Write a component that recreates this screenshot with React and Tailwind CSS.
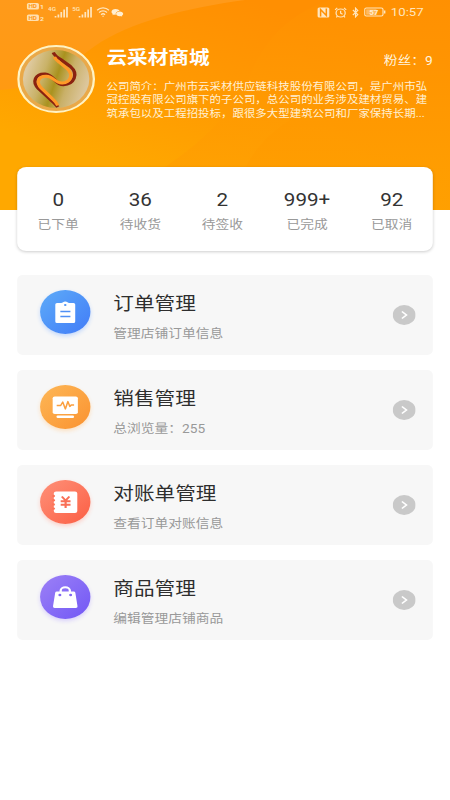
import React from 'react';

const STATS = [
    {value: '0', label: '已下单'},
    {value: '36', label: '待收货'},
    {value: '2', label: '待签收'},
    {value: '999+', label: '已完成'},
    {value: '92', label: '已取消'},
];

const OrderIcon = () => (
    <svg viewBox="0 0 44 44" className="size-11">
        <path fill="#fff" d="M14.8 13h3.700c1.200 0 1.800-1.600 3.500-1.600s2.300 1.600 3.500 1.600h3.700a1.500 1.500 0 0 1 1.500 1.500v17a1.500 1.500 0 0 1-1.500 1.500H14.800a1.500 1.500 0 0 1-1.500-1.500v-17a1.500 1.500 0 0 1 1.500-1.500z"/>
        <circle cx="22" cy="15" r="1.100" fill="#4f93f5"/>
        <path d="M17.700 21.500h8.800M17.700 26.500h8.800" stroke="#4f8ff5" strokeWidth="1.500"/>
    </svg>
);

const SalesIcon = () => (
    <svg viewBox="0 0 44 44" className="size-11">
        <rect x="11" y="11.500" width="22" height="17.500" rx="1.800" fill="#fff"/>
        <path d="M14.500 20.500h3.500l1.800-3.500 2.300 7 2.200-7.500 1.700 5 1.200-1.500h2.500" fill="none" stroke="#fb9f3e" strokeWidth="1.300" strokeLinejoin="round"/>
        <path d="M15.500 31.700h13" stroke="#fff" strokeWidth="2.400" strokeLinecap="round"/>
    </svg>
);

const BillIcon = () => (
    <svg viewBox="0 0 44 44" className="size-11">
        <rect x="12" y="11.500" width="20.500" height="21.500" rx="2" fill="#fff"/>
        <g fill="#fc7558">
            <circle cx="11.800" cy="16" r="1.200"/>
            <circle cx="11.800" cy="20.200" r="1.200"/>
            <circle cx="11.800" cy="24.400" r="1.200"/>
            <circle cx="11.800" cy="28.600" r="1.200"/>
        </g>
        <path d="M19 16.500l3.300 4 3.300-4M22.300 20.500v7.500M18 21.300h8.600M18 24.700h8.600" fill="none" stroke="#f96f56" strokeWidth="1.900"/>
    </svg>
);

const GoodsIcon = () => (
    <svg viewBox="0 0 44 44" className="size-11">
        <path d="M18 17v-1.500a4 3.200 0 0 1 8 0V17" fill="none" stroke="#fff" strokeWidth="2"/>
        <path fill="#fff" d="M14.700 16.500h14.600a1.500 1.500 0 0 1 1.500 1.300l1.900 13.500a1.500 1.500 0 0 1-1.500 1.700H12.800a1.500 1.500 0 0 1-1.500-1.700l1.900-13.500a1.500 1.500 0 0 1 1.500-1.300z"/>
        <circle cx="17.300" cy="20" r="1.300" fill="#8168f2"/>
        <circle cx="26.700" cy="20" r="1.300" fill="#8168f2"/>
    </svg>
);

const MENU = [
    {title: '订单管理', desc: '管理店铺订单信息', icon: OrderIcon, tone: 'from-[#5fabf8] to-[#427bf7] shadow-[0_2px_4px_#c3d8fb]'},
    {title: '销售管理', desc: '总浏览量：255', icon: SalesIcon, tone: 'from-[#fdb756] to-[#fa922e] shadow-[0_2px_4px_#fce0c0]'},
    {title: '对账单管理', desc: '查看订单对账信息', icon: BillIcon, tone: 'from-[#fe9078] to-[#fb5d43] shadow-[0_2px_4px_#fcd0c8]'},
    {title: '商品管理', desc: '编辑管理店铺商品', icon: GoodsIcon, tone: 'from-[#9d80f6] to-[#7256f5] shadow-[0_2px_4px_#d8d0fb]'},
];

const HeaderWaves = () => (
    <svg viewBox="0 0 450 210" preserveAspectRatio="none" className="absolute inset-0 h-full w-full">
        <defs>
            <linearGradient id="base" x1="0" y1="0" x2="0" y2="1">
                <stop offset="0" stopColor="#ff9a1a"/>
                <stop offset="0.420" stopColor="#ff9a12"/>
                <stop offset="1" stopColor="#ffa600"/>
            </linearGradient>
            <linearGradient id="sweep" gradientUnits="userSpaceOnUse" x1="250" y1="0" x2="190" y2="190">
                <stop offset="0" stopColor="#ff8f02"/>
                <stop offset="0.500" stopColor="#ff9902"/>
                <stop offset="1" stopColor="#ffa800"/>
            </linearGradient>
            <linearGradient id="fold" gradientUnits="userSpaceOnUse" x1="300" y1="0" x2="300" y2="170">
                <stop offset="0" stopColor="#ff9102"/>
                <stop offset="1" stopColor="#ff9f02"/>
            </linearGradient>
            <linearGradient id="tail" gradientUnits="userSpaceOnUse" x1="350" y1="75" x2="350" y2="210">
                <stop offset="0" stopColor="#ff9500"/>
                <stop offset="1" stopColor="#ffa000"/>
            </linearGradient>
        </defs>
        <rect width="450" height="210" fill="url(#base)"/>
        <path d="M0 90C40 88 65 68 95 46C130 22 185 8 245 0H450V210H0z" fill="url(#sweep)"/>
        <path d="M450 0H330C285 15 262 45 250 75C235 110 205 140 165 167V210H450z" fill="url(#fold)" opacity="0.700"/>
        <path d="M450 73C350 83 270 115 246 167V210H450z" fill="url(#tail)" opacity="0.700"/>
    </svg>
);

const Signal = ({label}) => (
    <svg viewBox="0 0 18 12" className="h-3 w-[18px]">
        <text x="0" y="5" fontSize="5.500" fontWeight="500" fill="#ffe5bd">{label}</text>
        <path d="M6.500 11.500v-1.500M9 11.500V8.500M11.500 11.500V6M14 11.500V3.500M16.500 11.500V1" stroke="#ffe5bd" strokeWidth="1.500"/>
    </svg>
);

const StatusBar = () => (
    <div className="relative flex h-6 items-center justify-between pl-[23px] pr-[23px] text-[#ffe5bd]">
        <div className="flex items-center gap-[3px]">
            <svg viewBox="0 0 16 20" className="h-5 w-4">
                {[0, 11.5].map((y) => (
                    <g key={y}>
                        <rect x="0.500" y={y + 1} width="10.500" height="6.500" rx="1.500" fill="#ffe0b0"/>
                        <text x="1.800" y={y + 6.300} fontSize="5.500" fontWeight="700" fill="#ff9a18">HD</text>
                        <text x="12" y={y + 7.300} fontSize="6" fontWeight="700" fill="#ffe5bd">{y === 0 ? '1' : '2'}</text>
                    </g>
                ))}
            </svg>
            <Signal label="4G"/>
            <Signal label="5G"/>
            <svg viewBox="0 0 14 12" className="h-3 w-3" preserveAspectRatio="none" fill="none" stroke="#ffe5bd" strokeWidth="1.300">
                <path d="M1 4.300a8.500 8.500 0 0 1 12 0M3 6.500a5.700 5.700 0 0 1 8 0M5 8.700a2.900 2.900 0 0 1 4 0"/>
                <circle cx="7" cy="10.300" r="0.700" fill="#ffe5bd" stroke="none"/>
            </svg>
            <svg viewBox="0 0 12 10" className="-ml-0.5 h-[9px] w-[11px]" fill="#ffefd2">
                <path d="M4.300 1C2 1 0.300 2.400 0.300 4.300c0 1 0.500 1.900 1.300 2.500L1.200 8l1.500-0.700c0.600 0.200 1.200 0.300 1.800 0.200C4 5 5.800 3.200 8.200 3.200 7.700 1.900 6.200 1 4.300 1z"/>
                <path d="M8.300 3.800c-2 0-3.500 1.200-3.500 2.700s1.500 2.700 3.500 2.700c0.400 0 0.800 0 1.200-0.200l1.200 0.700-0.300-1.200c0.800-0.500 1.300-1.200 1.300-2 0-1.500-1.500-2.700-3.400-2.700z"/>
            </svg>
        </div>
        <div className="flex items-center gap-1">
            <svg viewBox="0 0 11 11" className="size-[11px]">
                <rect x="0.300" y="0.500" width="10.400" height="10" rx="1.500" fill="#ffe5bd"/>
                <path d="M3 9.500V2.500l5 6V1.500" fill="none" stroke="#ff9003" strokeWidth="1.300"/>
            </svg>
            <svg viewBox="0 0 11 11" className="size-[11px]" fill="none" stroke="#ffe5bd" strokeWidth="1.100">
                <circle cx="5.500" cy="6" r="4"/>
                <path d="M5.500 3.800V6.200l1.700 1M0.600 2.800l2-1.900M10.400 2.800l-2-1.900M2.700 9.200L1.700 10.400M8.300 9.200l1 1.200"/>
            </svg>
            <svg viewBox="0 0 9 12" className="h-[11px] w-[7px]" preserveAspectRatio="none" fill="none" stroke="#ffe5bd" strokeWidth="1.300">
                <path d="M1.500 3.300l5.500 5L4.500 10.800V1.200L7 3.700l-5.500 5"/>
            </svg>
            <svg viewBox="0 0 19 10" className="h-2.5 w-[19px]">
                <rect x="0.500" y="1" width="16" height="8" rx="1.500" fill="none" stroke="#ffe5bd"/>
                <rect x="1.800" y="2.300" width="9" height="5.400" fill="#ffe5bd" opacity="0.500"/>
                <text x="4.500" y="7.600" fontSize="7" fontWeight="700" fill="#ffeccf">57</text>
                <path d="M18 3.500v3" stroke="#ffe5bd" strokeWidth="1.300"/>
            </svg>
            <span className="pt-0.5 text-[11.5px] leading-none">10:57</span>
        </div>
    </div>
);

const Avatar = () => (
    <svg viewBox="0 0 68 68" className="size-[68px] shrink-0">
        <defs>
            <linearGradient id="gold" x1="0" y1="0.350" x2="1" y2="0.650">
                <stop offset="0.050" stopColor="#dfcaa0"/>
                <stop offset="0.300" stopColor="#c9b268"/>
                <stop offset="0.500" stopColor="#a9921e"/>
                <stop offset="0.680" stopColor="#c9b068"/>
                <stop offset="0.950" stopColor="#dcc69c"/>
            </linearGradient>
        </defs>
        <circle cx="34" cy="34" r="33" fill="#eaa948" stroke="#fff3c4" strokeWidth="2"/>
        <circle cx="34" cy="34" r="29" fill="url(#gold)"/>
        <g fill="none" strokeLinejoin="round">
            <path d="M31.500 7.500Q33 11 38 14.500L46.500 21.500C54 29 49.500 39.500 40.500 39.800C33 40 32 29.500 24.500 29C15.500 28.500 13 37 18.500 43.500L29 54.500Q33 58 35.500 62" stroke="#8a2210" strokeWidth="3"/>
            <path d="M32.500 12Q33.500 14.500 36.500 17L43.500 23.500C50 30 46 37.500 39.500 38C33 38.500 32 31.500 25.500 31.200C18 31 16.500 37.500 21 43L31 54Q34 57 35.500 60.500" stroke="#ff9a28" strokeWidth="3"/>
        </g>
    </svg>
);

const Header = () => (
    <header className="relative h-[210px]">
        <HeaderWaves/>
        <StatusBar/>
        <div className="relative mt-[21px] flex gap-[10px] px-[15px] text-white">
            <Avatar/>
            <div className="min-w-0 flex-1">
                <div className="flex items-center justify-between">
                    <h1 className="text-[18px] font-bold leading-[26px]">云采材商城</h1>
                    <span className="pt-1.5 text-xs text-[#fff3dd]">粉丝：9</span>
                </div>
                <p className="mt-[9px] w-[282px] text-[10px] leading-[13.3px] text-[#fff0d4]">
                    公司简介：广州市云采材供应链科技股份有限公司，是广州市弘冠控股有限公司旗下的子公司，总公司的业务涉及建材贸易、建筑承包以及工程招投标，跟很多大型建筑公司和厂家保持长期...
                </p>
            </div>
        </div>
    </header>
);

const MenuRow = ({title, desc, icon: Icon, tone}) => (
    <button type="button" className="flex h-20 w-full items-center rounded-[5px] bg-[#f7f7f7] pl-[19.5px] pr-[15px] text-left">
        <span className={`mb-[7px] rounded-full bg-gradient-to-br ${tone}`}>
            <Icon/>
        </span>
        <span className="ml-[20.5px] flex flex-1 flex-col gap-2 pt-1">
            <span className="text-[18px] leading-6 text-[#2e2e2e]">{title}</span>
            <span className="pt-px text-xs leading-[18px] text-[#999]">{desc}</span>
        </span>
        <svg viewBox="0 0 20 20" className="size-5">
            <circle cx="10" cy="10" r="10" fill="#c9c9c9"/>
            <path d="M8 6.500l4 3.500-4 3.500" fill="none" stroke="#fff" strokeWidth="1.500"/>
        </svg>
    </button>
);

const App = () => (
    <div className="h-[800px] w-[450px] overflow-hidden bg-white">
        <div className="h-full w-[393px] origin-top-left scale-x-[1.145] font-['Roboto','Noto_Sans_CJK_SC',sans-serif]">
            <Header/>
            <main className="relative -mt-[43px] px-[15px]">
                <section className="flex h-[84px] justify-around rounded-lg bg-white pt-[21px] shadow-[0_1px_3px_rgba(0,0,0,0.2)]">
                    {STATS.map((s) => (
                        <div key={s.label} className="flex flex-col items-center">
                            <span className="text-[18px] leading-6 text-[#333]">{s.value}</span>
                            <span className="mt-1 text-xs leading-[18px] text-[#999]">{s.label}</span>
                        </div>
                    ))}
                </section>
                <nav className="mt-6 flex flex-col gap-[15px]">
                    {MENU.map((item) => (
                        <MenuRow key={item.title} {...item}/>
                    ))}
                </nav>
            </main>
        </div>
    </div>
);

export default App;
